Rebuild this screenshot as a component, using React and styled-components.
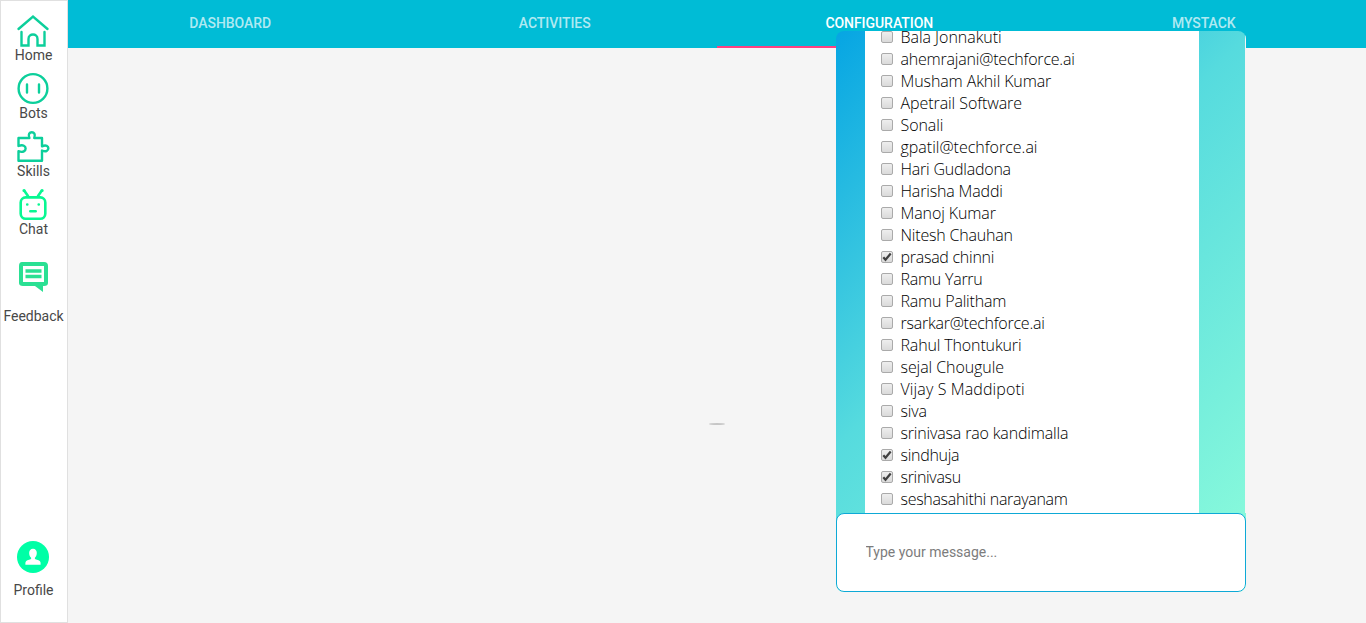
import React from 'react';
import styled, { createGlobalStyle } from 'styled-components';

const GlobalStyle = createGlobalStyle`
  * { box-sizing: border-box; }
  body { margin: 0; background: #f5f5f5; font-family: Roboto, sans-serif; overflow: hidden; }
`;

const Page = styled.div`
  display: flex;
  height: 623px;
  position: relative;
`;

const Sidebar = styled.nav`
  width: 68px;
  flex: none;
  display: flex;
  flex-direction: column;
  background: #fff;
  border: 1px solid #e0e0e0;
  padding: 13px 1px 0 0;
`;

const NavItem = styled.a`
  display: flex;
  flex-direction: column;
  align-items: center;
  height: ${p => p.$height || 58}px;
  margin-top: ${p => p.$push || '0'};
  color: #484848;
  font-size: 14px;
  line-height: 18px;
  white-space: nowrap;
  svg { display: block; flex: none; margin: 0 1px ${p => p.$gap ?? -1}px 0; }
`;

const TabBar = styled.header`
  flex: 1;
  height: 48px;
  display: grid;
  grid-template-columns: repeat(4, 1fr);
  background: #00bcd6;
`;

const Tab = styled.div`
  display: flex;
  align-items: center;
  justify-content: center;
  padding-bottom: ${p => (p.$active ? 0 : 2)}px;
  border-bottom: ${p => (p.$active ? '2px solid #ff4081' : '0')};
  color: ${p => (p.$active ? '#fff' : 'rgba(255, 255, 255, 0.7)')};
  font-size: 14px;
  font-weight: 500;
  letter-spacing: -0.05px;
`;

const Handle = styled.div`
  position: absolute;
  left: 709px;
  top: 423px;
  width: 16px;
  height: 2px;
  background: #c6c6c6;
  border-radius: 50%;
`;

const ChatWindow = styled.section`
  position: absolute;
  left: 836px;
  top: 31px;
  width: 410px;
  height: 561px;
  display: flex;
  flex-direction: column;
  overflow: hidden;
  border-radius: 8px;
  background: linear-gradient(135deg, #06a5e3 0%, #56dbde 43%, #89fadb 95%);
`;

const Conversation = styled.div`
  height: 482px;
  flex: none;
  padding: 0 46px 0 29px;
  border-right: 1px solid #f5f5f5;
`;

const PeopleList = styled.ul`
  height: 100%;
  margin: 0;
  padding: 0 0 3px 16px;
  list-style: none;
  background: #fff;
  overflow: hidden;
  display: flex;
  flex-direction: column;
  justify-content: flex-end;
`;

const Person = styled.li`
  display: flex;
  align-items: center;
  height: 22px;
  flex: none;
  color: #000;
  font: 300 16px/22px 'Open Sans', sans-serif;
  letter-spacing: ${p => p.$tracking}px;
  white-space: nowrap;
`;

const Check = styled.span`
  display: block;
  width: 12px;
  height: 12px;
  margin: 0 7.500px 0 0;
  border: 1px solid #aaa;
  border-radius: 2px;
  background: linear-gradient(#eee, #dadada);
  svg { display: block; width: 10px; height: 10px; }
`;

const Composer = styled.div`
  flex: none;
  height: 79px;
  padding: 0 28px 2px 28.500px;
  border: 1px solid #0ea9d6;
  border-radius: 8px;
  background: #fff;
  display: flex;
  align-items: center;
`;

const MessageInput = styled.input`
  width: 100%;
  border: 0;
  outline: 0;
  padding: 0;
  font: 14px Roboto, sans-serif;
  background: transparent;
  &::placeholder { color: #7c7c7c; opacity: 1; }
`;

const people = [
  { name: 'Bala Jonnakuti', tracking: -0.03 },
  { name: 'ahemrajani@techforce.ai', tracking: -0.2 },
  { name: 'Musham Akhil Kumar', tracking: -0.11 },
  { name: 'Apetrail Software', tracking: -0.07 },
  { name: 'Sonali', tracking: -0.1 },
  { name: 'gpatil@techforce.ai', tracking: 0 },
  { name: 'Hari Gudladona', tracking: -0.22 },
  { name: 'Harisha Maddi', tracking: -0.16 },
  { name: 'Manoj Kumar', tracking: -0.1 },
  { name: 'Nitesh Chauhan', tracking: -0.2 },
  { name: 'prasad chinni', tracking: -0.26, checked: true },
  { name: 'Ramu Yarru', tracking: -0.25 },
  { name: 'Ramu Palitham', tracking: -0.2 },
  { name: 'rsarkar@techforce.ai', tracking: -0.24 },
  { name: 'Rahul Thontukuri', tracking: -0.14 },
  { name: 'sejal Chougule', tracking: -0.07 },
  { name: 'Vijay S Maddipoti', tracking: 0.12 },
  { name: 'siva', tracking: -0.1 },
  { name: 'srinivasa rao kandimalla', tracking: -0.16 },
  { name: 'sindhuja', tracking: -0.28, checked: true },
  { name: 'srinivasu', tracking: -0.3, checked: true },
  { name: 'seshasahithi narayanam', tracking: -0.3 },
];

const HomeIcon = () => (
  <svg width="34" height="33" viewBox="0 0 34 33" fill="none" stroke="#0ccf9b" strokeWidth="2.4" strokeLinecap="round">
    <path d="M2.500 15 17 2.500 31.500 15" />
    <path d="M5.500 18v13.500h7V25c0-6 9-6 9 0v6.500h7V18" />
  </svg>
);

const BotIcon = () => (
  <svg width="34" height="33" viewBox="0 0 34 33" fill="none" stroke="#0ccf9b" strokeWidth="2.4" strokeLinecap="round">
    <circle cx="17" cy="16.500" r="14.400" />
    <path d="M11 12.500v8M23 12.500v8" />
  </svg>
);

const SkillsIcon = () => (
  <svg width="34" height="33" viewBox="0 0 34 33" fill="none" stroke="#0ccf9b" strokeWidth="2.400" strokeLinejoin="round">
    <path d="M2.500 8h8.700h2.200C10 .3 21.600 .3 18.200 8H26v8.300c8.500-4 8.500 8 0 4.200V30.700H2.500v-9.500c9.500 3.600 9.500-9 0-5.200Z" />
  </svg>
);

const ChatIcon = () => (
  <svg width="34" height="33" viewBox="0 0 34 33" fill="none" stroke="#08f792" strokeWidth="2.600" strokeLinecap="round">
    <rect x="4.700" y="9.400" width="24.600" height="21.300" rx="5" />
    <path d="m12 8-3.500-5M22 8l3.500-5" />
    <path d="M8 2.500h.1M26 2.500h.1" strokeWidth="3.200" />
    <path d="M11.200 16.500h.1M22.700 16.500h.1M14.300 23.300h5.400" />
  </svg>
);

const FeedbackIcon = () => (
  <svg width="34" height="33" viewBox="0 0 34 33">
    <path fill="#2ae093" fillRule="evenodd" d="M6 1h22q4 0 4 4v17q0 3-4 3h-1v6l-8-6H7q-4 0-4-3V5q0-4 3-4Zm1 4v16h21V5Z" />
    <path d="M9.500 10h16M9.500 15.500h16" stroke="#2ae093" strokeWidth="3.500" />
  </svg>
);

const ProfileIcon = () => (
  <svg width="34" height="34" viewBox="0 0 34 34">
    <circle cx="17" cy="17" r="16" fill="#00ffa6" />
    <path fill="#fff" d="M17 8.700c-5 0-4.500 7-1.900 9v1.200c-3 1-5 1.300-5.500 3-.3 1-.2 2.800-.2 2.800h15.200s.1-1.800-.2-2.800c-.5-1.700-2.500-2-5.500-3v-1.200c2.600-2 3.100-9-1.900-9Z" />
  </svg>
);

const Tick = () => (
  <svg viewBox="0 0 10 10" fill="none" stroke="#404040" strokeWidth="2.200">
    <path d="m1.300 5.200 2.200 2.600L8.700 1.500" />
  </svg>
);

export default function App() {
  return (
    <Page>
      <GlobalStyle />
      <Sidebar>
        <NavItem><HomeIcon />Home</NavItem>
        <NavItem><BotIcon />Bots</NavItem>
        <NavItem><SkillsIcon />Skills</NavItem>
        <NavItem><ChatIcon />Chat</NavItem>
        <NavItem $push="15px" $gap={13} $height={68}><FeedbackIcon />Feedback</NavItem>
        <NavItem $push="auto" $gap={7} $height={82}><ProfileIcon />Profile</NavItem>
      </Sidebar>
      <TabBar>
        <Tab>DASHBOARD</Tab>
        <Tab>ACTIVITIES</Tab>
        <Tab $active>CONFIGURATION</Tab>
        <Tab>MYSTACK</Tab>
      </TabBar>
      <Handle />
      <ChatWindow>
        <Conversation>
          <PeopleList>
            {people.map(({ name, tracking, checked }) => (
              <Person key={name} $tracking={tracking}>
                <Check>{checked && <Tick />}</Check>
                {name}
              </Person>
            ))}
          </PeopleList>
        </Conversation>
        <Composer>
          <MessageInput placeholder="Type your message..." />
        </Composer>
      </ChatWindow>
    </Page>
  );
}
